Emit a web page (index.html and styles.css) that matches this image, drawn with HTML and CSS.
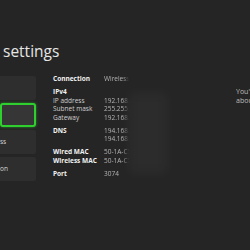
FILE: index.html
```html
<!DOCTYPE html>
<html lang="en">
<head>
    <meta charset="UTF-8">
    <meta name="viewport" content="width=device-width, initial-scale=1.0">
    <title>Network settings</title>
    <link rel="stylesheet" href="styles.css">
</head>
<body>
    <h1 class="title">settings</h1>

    <div class="layout">
        <div class="menu">
            <div class="menu-item"></div>
            <div class="menu-item selected"></div>
            <div class="menu-item">ss</div>
            <div class="menu-item">on</div>
        </div>

        <div class="details">
            <div class="group">
                <div class="row"><span class="label head">Connection</span><span class="value">Wireless</span></div>
            </div>
            <div class="group">
                <div class="row"><span class="label head">IPv4</span></div>
                <div class="row"><span class="label">IP address</span><span class="value">192.168.0.12</span></div>
                <div class="row"><span class="label">Subnet mask</span><span class="value">255.255.255.0</span></div>
                <div class="row"><span class="label">Gateway</span><span class="value">192.168.0.1</span></div>
            </div>
            <div class="group">
                <div class="row"><span class="label head">DNS</span><span class="value">194.168.4.100</span></div>
                <div class="row"><span class="label"></span><span class="value">194.168.8.100</span></div>
            </div>
            <div class="group">
                <div class="row"><span class="label head">Wired MAC</span><span class="value">50-1A-C5-00-00-00</span></div>
                <div class="row"><span class="label head">Wireless MAC</span><span class="value">50-1A-C5-00-00-01</span></div>
            </div>
            <div class="group">
                <div class="row"><span class="label head">Port</span><span class="value">3074</span></div>
            </div>
            <div class="haze"></div>
        </div>

        <div class="aside">
            <p>You're connected to the internet.</p>
            <p>about your network.</p>
        </div>
    </div>
</body>
</html>
```

FILE: styles.css
```css
body {
    margin: 0;
    width: 250px;
    height: 250px;
    overflow: hidden;
    background-color: #252525;
    color: #e8e8e8;
    font-family: "Open Sans", "Noto Sans", sans-serif;
}

.title {
    margin: 0;
    padding: 41px 0 0 3px;
    font-size: 15.5px;
    font-weight: 400;
    line-height: 20px;
    color: #e6e6e6;
    white-space: nowrap;
}

.layout {
    display: grid;
    grid-template-columns: 36px 166px 14px;
    column-gap: 17px;
    margin-top: 15px;
}

.menu {
    display: flex;
    flex-direction: column;
    gap: 3px;
}

.menu-item {
    height: 24px;
    box-sizing: border-box;
    background: #2e2e2e;
    border-radius: 0 2px 2px 0;
    font-size: 6.5px;
    line-height: 24px;
    color: #d8d8d8;
    white-space: nowrap;
}

.menu-item.selected {
    background: #363636;
    border: 2px solid #2fcf2f;
    border-radius: 3px;
    box-shadow: 0 0 3px rgba(47, 207, 47, 0.6);
}

.details {
    position: relative;
    margin-top: -1px;
    font-size: 6.5px;
    line-height: 8.5px;
}

.group {
    margin-bottom: 4.5px;
}

.row {
    display: flex;
    height: 8.5px;
}

.label {
    width: 51px;
    flex-shrink: 0;
    color: #d0d0d0;
    white-space: nowrap;
}

.label.head {
    font-weight: 700;
    color: #f2f2f2;
}

.value {
    width: 25px;
    overflow: hidden;
    white-space: nowrap;
    color: #b4b4b4;
    -webkit-mask-image: linear-gradient(to right, #000 75%, transparent);
    mask-image: linear-gradient(to right, #000 75%, transparent);
}

.haze {
    position: absolute;
    left: 76px;
    top: 18px;
    width: 38px;
    height: 80px;
    background: rgba(255, 255, 255, 0.035);
    filter: blur(6px);
}

.aside {
    padding-top: 12px;
    overflow: hidden;
}

.aside p {
    margin: 0;
    font-size: 7px;
    line-height: 8.5px;
    color: #bdbdbd;
    white-space: nowrap;
}
```
